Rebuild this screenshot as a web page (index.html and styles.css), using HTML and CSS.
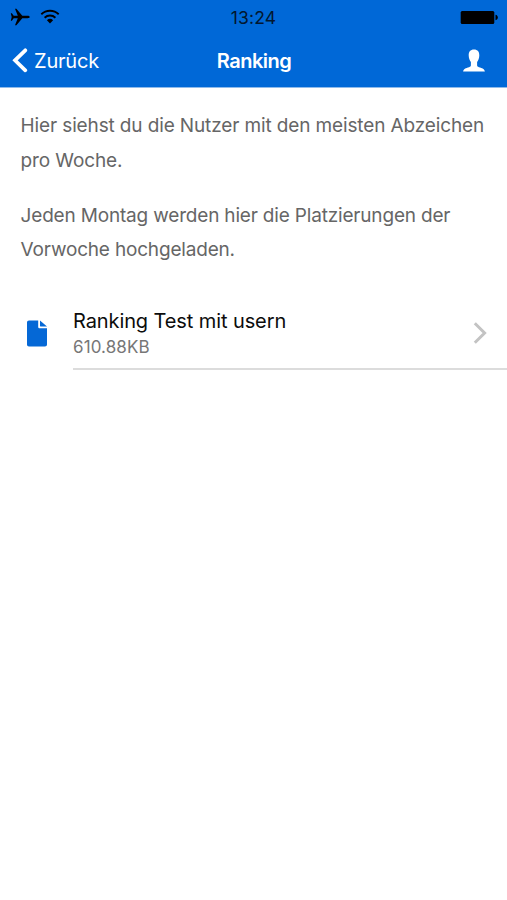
FILE: index.html
```html
<!DOCTYPE html>
<html lang="de">
<head>
<meta charset="utf-8">
<title>Ranking</title>
<link rel="stylesheet" href="styles.css">
</head>
<body>
<header class="header">
  <div class="status">
    <div class="status-left">
      <svg width="20" height="18" viewBox="0 0 20 18"><path d="M19.700 9c0-.8-.9-1.200-2.200-1.200h-5.200L6.400.8H5l2.800 7H3.700L1.900 5.300H.8L1.700 9l-.9 3.700h1.100l1.800-2.500h4.100l-2.800 7h1.400l5.900-7h5.200c1.300 0 2.200-.4 2.200-1.200z"/></svg>
      <svg class="wifi" width="20" height="15" viewBox="0 0 20 15"><g fill="none" stroke="#000" stroke-width="1.900"><path d="M1.300 5.200a12.500 12.500 0 0 1 17.400 0"/><path d="M4.600 8.700a7.800 7.800 0 0 1 10.800 0"/></g><path d="M6.900 11.200a4.500 4.500 0 0 1 6.200 0L10 14.500z"/></svg>
    </div>
    <div class="time">13:24</div>
    <svg class="battery" width="38" height="15" viewBox="0 0 38 15"><rect x=".7" y="1" width="33.600" height="13" rx="1.500"/><path d="M35.500 4.800c1.500.3 2.300 1.300 2.300 2.700s-.8 2.400-2.300 2.700z"/></svg>
  </div>
  <nav class="navbar">
    <a class="back"><svg width="16" height="26" viewBox="0 0 16 26"><path d="M13.300 2.300 3 12.300l10.300 10" fill="none" stroke="#fff" stroke-width="3.700" stroke-linecap="round"/></svg><span>Zurück</span></a>
    <h1 class="title">Ranking</h1>
    <svg class="user" width="22" height="23" viewBox="0 0 22 23"><path fill="#fff" d="M11 .5c3.600 0 5.500 2.300 5.300 6-.1 3-1 5-2.200 6.600v3.200c0 1 .7 1.500 1.800 1.900 3.300 1 5.700 1.600 6 4.300H.1c.3-2.700 2.700-3.300 6-4.300 1.100-.4 1.800-.9 1.800-1.900v-3.200C6.700 11.500 5.800 9.500 5.700 6.500 5.500 2.800 7.400.5 11 .5z"/></svg>
  </nav>
</header>
<main>
  <section class="intro">
    <p>Hier siehst du die Nutzer mit den meisten Abzeichen<br>pro Woche.</p>
    <p class="note">Jeden Montag werden hier die Platzierungen der<br>Vorwoche hochgeladen.</p>
  </section>
  <a class="item">
    <svg width="20" height="27" viewBox="0 0 20 27"><path fill="#0568d6" d="M2 .5h9.200v6.300c0 1 .6 1.500 1.500 1.500H20v16.200c0 1.200-.8 2-2 2H2c-1.200 0-2-.8-2-2v-22c0-1.200.8-2 2-2zM13 .5l7 6.100h-5.800c-.8 0-1.200-.4-1.200-1.200z"/></svg>
    <div class="body">
      <div class="text"><div class="name">Ranking Test mit usern</div><div class="size">610.88KB</div></div>
      <svg width="14" height="24" viewBox="0 0 14 24"><path d="M1.800 2.300 11.600 12l-9.800 9.700" fill="none" stroke="#c3c3c3" stroke-width="3"/></svg>
    </div>
  </a>
</main>
</body>
</html>
```

FILE: styles.css
```css
* { box-sizing: border-box; }
body { margin: 0; background: #fff; font-family: Inter, "Liberation Sans", sans-serif; }
svg { display: block; flex: none; }
.header { height: 88px; background: #0068d7; border-bottom: 1px solid #8fbbeb; }
.status { height: 34px; padding: 0 9px 0 10px; display: grid; grid-template-columns: 1fr auto 1fr; align-items: center; }
.status-left { display: flex; align-items: center; gap: 10px; }
.wifi { margin-top: -2px; }
.time { padding-top: 1px; font-size: 17.5px; letter-spacing: 0.2px; color: #03172f; transform: translateX(-0.5px); }
.battery { justify-self: end; }
.navbar { height: 53px; padding: 0 22px 0 12px; display: grid; grid-template-columns: 1fr auto 1fr; align-items: center; color: #fff; }
.back { display: flex; align-items: center; gap: 6px; margin-right: -10px; font-size: 20px; letter-spacing: -0.2px; }
.title { margin: 0; padding-left: 11px; font-size: 20px; font-weight: 600; letter-spacing: -0.5px; }
.user { justify-self: end; }
.intro { padding: 20px 20px 0 20.6px; font-size: 19px; line-height: 35px; letter-spacing: -0.13px; color: #666; white-space: nowrap; }
.intro p { margin: 0 0 20px; }
.intro .note { line-height: 34px; letter-spacing: -0.18px; padding-top: 1px; margin-bottom: 21px; }
.item { display: flex; align-items: center; height: 74px; margin-top: 29px; padding-left: 27px; }
.body { flex: 1; height: 74px; margin-left: 26px; padding: 1px 20px 0 0; display: flex; align-items: center; justify-content: space-between; border-bottom: 2px solid #dcdcdc; }
.text { padding-top: 3px; }
.name { font-size: 20px; line-height: 26px; letter-spacing: -0.1px; color: #0c0c0c; }
.size { font-size: 17px; line-height: 26px; letter-spacing: 0.1px; color: #777; }
```
